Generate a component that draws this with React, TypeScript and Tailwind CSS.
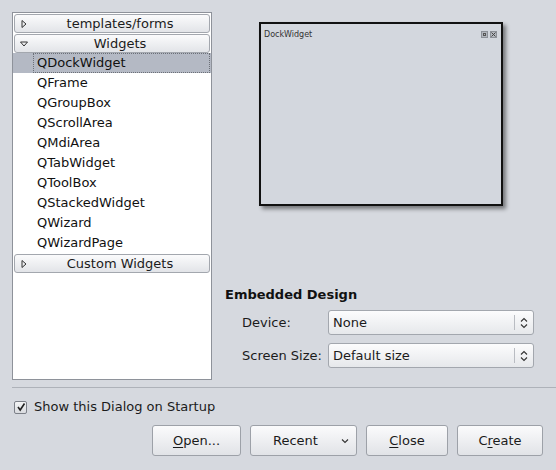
import React from "react";

const font = { fontFamily: '"DejaVu Sans", "Liberation Sans", sans-serif' };

function Header({ label, open }: { label: string; open?: boolean }) {
  return (
    <div className="relative mx-[1px] h-[19px] rounded-[3px] border border-[#a3a7ae] bg-gradient-to-b from-[#fbfbfc] to-[#e2e4e8] flex items-center justify-center pl-[16px] text-[13px] leading-none text-[#1b1b1b]">
      <span className="absolute left-[4px] top-[4px]">
        {open ? (
          <svg width="10" height="10" viewBox="0 0 10 10">
            <path d="M1.5 3 L8.5 3 L5 7 Z" fill="none" stroke="#333" strokeWidth="1" />
          </svg>
        ) : (
          <svg width="10" height="10" viewBox="0 0 10 10">
            <path d="M3 1.5 L3 8.5 L7 5 Z" fill="none" stroke="#333" strokeWidth="1" />
          </svg>
        )}
      </span>
      <span>{label}</span>
    </div>
  );
}

function Combo({ value }: { value: string }) {
  return (
    <div className="w-[206px] h-[25px] rounded-[3px] border border-[#a3a7ae] bg-gradient-to-b from-[#fcfcfd] to-[#e6e8eb] flex items-center pl-[4px] text-[13px] text-[#1b1b1b]">
      <span className="flex-1">{value}</span>
      <div className="w-px h-[15px] bg-[#b9bcc2]" />
      <div className="w-[18px] flex justify-center">
        <svg width="8" height="12" viewBox="0 0 8 12">
          <path d="M1 4.5 L4 1.5 L7 4.5 M1 7.5 L4 10.5 L7 7.5" fill="none" stroke="#333" strokeWidth="1.1" />
        </svg>
      </div>
    </div>
  );
}

function Button({ children, w }: { children: React.ReactNode; w: string }) {
  return (
    <div
      className={`${w} h-[31px] rounded-[3px] border border-[#9da1a8] bg-gradient-to-b from-[#fbfbfc] to-[#e1e3e7] flex items-center justify-center text-[13px] text-[#1b1b1b]`}
    >
      {children}
    </div>
  );
}

export default function App() {
  const items = [
    "QFrame",
    "QGroupBox",
    "QScrollArea",
    "QMdiArea",
    "QTabWidget",
    "QToolBox",
    "QStackedWidget",
    "QWizard",
    "QWizardPage",
  ];
  return (
    <div className="w-[556px] h-[470px] bg-[#d6d9df] overflow-hidden flex flex-col" style={font}>
      <div className="flex pl-[12px] pt-[12px] h-[376px]">
        <div className="w-[200px] h-[368px] border border-[#8e929a] bg-white pt-[1px] flex flex-col">
          <Header label="templates/forms" />
          <div className="h-[1px]" />
          <Header label="Widgets" open />
          <div className="h-[20px] bg-[#b4b9c4] flex items-center">
            <div className="ml-[20px] mr-[1px] flex-1 h-[20px] border border-dotted border-[#6b6f77] flex items-center pl-[3px] text-[13px] text-[#111]">
              QDockWidget
            </div>
          </div>
          {items.map((t) => (
            <div key={t} className="h-[20px] flex items-center pl-[24px] text-[13px] text-[#111]">
              {t}
            </div>
          ))}
          <div className="h-[1px]" />
          <Header label="Custom Widgets" />
        </div>
        <div className="flex-1 flex flex-col">
          <div className="pl-[47px] pt-[10px] h-[272px]">
            <div className="relative w-[244px] h-[184px] border-[2px] border-[#111] bg-[#d3d7de] shadow-[3px_3px_4px_rgba(0,0,0,0.45)]">
              <div className="absolute left-[3px] top-[5px] text-[8px] text-[#333]">DockWidget</div>
              <div className="absolute right-[4px] top-[7px] flex gap-[2px]">
                <div className="w-[7px] h-[7px] bg-[#b3b7be] border border-[#8d9198] flex items-center justify-center">
                  <div className="w-[3px] h-[3px] border border-[#555]" />
                </div>
                <div className="w-[7px] h-[7px] bg-[#b3b7be] border border-[#8d9198] flex items-center justify-center">
                  <svg width="5" height="5" viewBox="0 0 5 5">
                    <path d="M0.5 0.5 L4.5 4.5 M4.5 0.5 L0.5 4.5" stroke="#444" strokeWidth="1" />
                  </svg>
                </div>
              </div>
            </div>
          </div>
          <div className="pl-[13px]">
            <div className="text-[13px] font-bold text-[#111] h-[22px] leading-[22px]">Embedded Design</div>
            <div className="flex items-center mt-[4px] pl-[17px]">
              <div className="w-[86px] text-[13px] text-[#1b1b1b]">Device:</div>
              <Combo value="None" />
            </div>
            <div className="flex items-center mt-[8px] pl-[17px]">
              <div className="w-[86px] text-[13px] text-[#1b1b1b]">Screen Size:</div>
              <Combo value="Default size" />
            </div>
          </div>
        </div>
      </div>
      <div className="ml-[12px] mt-[11px] h-px bg-[#aeb2b9]" />
      <div className="flex items-center pl-[14px] mt-[11px] h-[16px]">
        <div className="w-[13px] h-[13px] border border-[#7c8088] bg-gradient-to-b from-[#f4f5f6] to-[#d9dbdf] rounded-[2px] flex items-center justify-center">
          <svg width="10" height="10" viewBox="0 0 10 10">
            <path d="M2 5 L4.2 8 L8.5 1.5" fill="none" stroke="#222" strokeWidth="1.6" />
          </svg>
        </div>
        <span className="ml-[7px] text-[13px] text-[#1b1b1b]">Show this Dialog on Startup</span>
      </div>
      <div className="flex justify-end gap-[9px] pr-[13px] mt-[10px]">
        <Button w="w-[89px]">
          <span>
            <span className="underline underline-offset-2">O</span>pen...
          </span>
        </Button>
        <div className="w-[107px] h-[31px] rounded-[3px] border border-[#9da1a8] bg-gradient-to-b from-[#fbfbfc] to-[#e1e3e7] flex items-center pl-[22px] pr-[7px] text-[13px] text-[#1b1b1b]">
          <span className="flex-1">Recent</span>
          <svg width="8" height="6" viewBox="0 0 8 6">
            <path d="M1 1.5 L4 4.5 L7 1.5" fill="none" stroke="#333" strokeWidth="1.1" />
          </svg>
        </div>
        <Button w="w-[82px]">
          <span>
            <span className="underline underline-offset-2">C</span>lose
          </span>
        </Button>
        <Button w="w-[86px]">
          <span>
            C<span className="underline underline-offset-2">r</span>eate
          </span>
        </Button>
      </div>
    </div>
  );
}
